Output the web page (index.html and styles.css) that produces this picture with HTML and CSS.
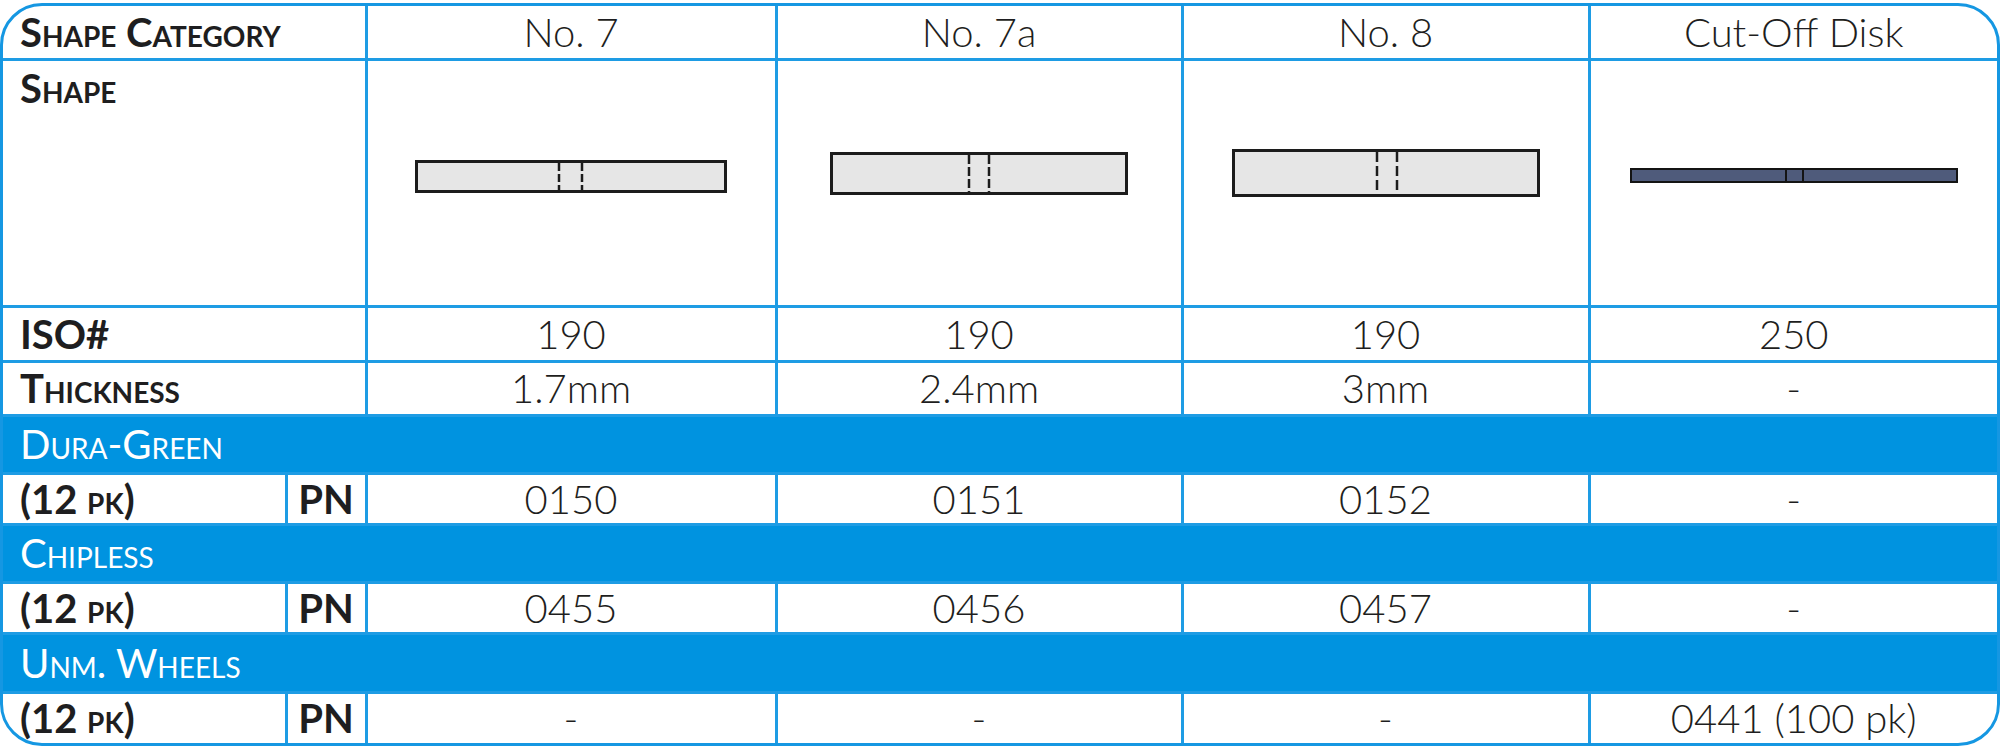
FILE: index.html
```html
<!DOCTYPE html>
<html>
<head>
<meta charset="utf-8">
<link rel="stylesheet" href="styles.css">
</head>
<body>
  <div class="chart">
    <table>
      <colgroup>
        <col class="col-label">
        <col class="col-pn">
        <col class="col-a">
        <col class="col-b">
        <col class="col-c">
        <col class="col-d">
      </colgroup>

      <!-- header -->
      <tr class="row-head">
        <th colspan="2" class="label">Shape Category</th>
        <th>No. 7</th>
        <th>No. 7a</th>
        <th>No. 8</th>
        <th>Cut-Off Disk</th>
      </tr>

      <!-- shape drawings -->
      <tr class="row-shape">
        <td colspan="2" class="label label-top">Shape</td>
        <td class="shape">
          <svg width="312" height="60" viewBox="0 0 312 60">
            <rect x="1.5" y="15.5" width="309" height="30" fill="#e6e6e6" stroke="#1c1c1c" stroke-width="3"/>
            <line x1="144" y1="17" x2="144" y2="44" stroke="#1c1c1c" stroke-width="2.5" stroke-dasharray="8 3"/>
            <line x1="167" y1="17" x2="167" y2="44" stroke="#1c1c1c" stroke-width="2.5" stroke-dasharray="8 3"/>
          </svg>
        </td>
        <td class="shape">
          <svg width="298" height="60" viewBox="0 0 298 60">
            <rect x="1.5" y="7.5" width="295" height="40" fill="#e6e6e6" stroke="#1c1c1c" stroke-width="3"/>
            <line x1="139" y1="9" x2="139" y2="46" stroke="#1c1c1c" stroke-width="2.5" stroke-dasharray="9 3"/>
            <line x1="159" y1="9" x2="159" y2="46" stroke="#1c1c1c" stroke-width="2.5" stroke-dasharray="9 3"/>
          </svg>
        </td>
        <td class="shape">
          <svg width="308" height="60" viewBox="0 0 308 60">
            <rect x="1.5" y="4.5" width="305" height="45" fill="#e6e6e6" stroke="#1c1c1c" stroke-width="3"/>
            <line x1="145" y1="6" x2="145" y2="48" stroke="#1c1c1c" stroke-width="2.5" stroke-dasharray="10 4"/>
            <line x1="165" y1="6" x2="165" y2="48" stroke="#1c1c1c" stroke-width="2.5" stroke-dasharray="10 4"/>
          </svg>
        </td>
        <td class="shape">
          <svg width="328" height="60" viewBox="0 0 328 60">
            <rect x="1" y="23" width="326" height="13" fill="#4f5b7b" stroke="#141414" stroke-width="2"/>
            <line x1="156" y1="23" x2="156" y2="36" stroke="#141414" stroke-width="2"/>
            <line x1="173" y1="23" x2="173" y2="36" stroke="#141414" stroke-width="2"/>
          </svg>
        </td>
      </tr>

      <tr class="row-iso">
        <td colspan="2" class="label">ISO#</td>
        <td>190</td>
        <td>190</td>
        <td>190</td>
        <td>250</td>
      </tr>

      <tr class="row-thick">
        <td colspan="2" class="label">Thickness</td>
        <td>1.7mm</td>
        <td>2.4mm</td>
        <td>3mm</td>
        <td>-</td>
      </tr>

      <!-- Dura-Green -->
      <tr class="band">
        <td colspan="6">Dura-Green</td>
      </tr>
      <tr class="row-pn">
        <td class="label">(12 pk)</td>
        <td class="pn">PN</td>
        <td>0150</td>
        <td>0151</td>
        <td>0152</td>
        <td>-</td>
      </tr>

      <!-- Chipless -->
      <tr class="band">
        <td colspan="6">Chipless</td>
      </tr>
      <tr class="row-pn">
        <td class="label">(12 pk)</td>
        <td class="pn">PN</td>
        <td>0455</td>
        <td>0456</td>
        <td>0457</td>
        <td>-</td>
      </tr>

      <!-- Unmounted wheels -->
      <tr class="band band-last">
        <td colspan="6">Unm. Wheels</td>
      </tr>
      <tr class="row-pn">
        <td class="label">(12 pk)</td>
        <td class="pn">PN</td>
        <td>-</td>
        <td>-</td>
        <td>-</td>
        <td>0441 (100 pk)</td>
      </tr>
    </table>
  </div>
</body>
</html>
```

FILE: styles.css
```css
body {
  margin: 0;
  padding-top: 3px;
  background-color: #ffffff;
  font-family: Lato, "Open Sans", sans-serif;
  color: #1e1e20;
}

.chart {
  height: 737px;
  border: 3px solid #1597e2;
  border-radius: 42px;
  overflow: hidden;
}

table {
  width: 100%;
  border-collapse: collapse;
  border-style: hidden;
  table-layout: fixed;
  font-size: 40px;
}

th,
td {
  border: 3px solid #1e9ce4;
  padding: 0;
  text-align: center;
  font-weight: 300;
  white-space: nowrap;
}

.col-label { width: 283px; }
.col-pn { width: 80px; }
.col-a { width: 410px; }
.col-b { width: 406px; }
.col-c { width: 407px; }
.col-d { width: 408px; }

.row-head { height: 53px; }
.row-shape { height: 247px; }
.row-iso { height: 55px; }
.row-thick { height: 54px; }
.row-pn { height: 51px; }
.band { height: 58px; }
.band-last { height: 59px; }

.label {
  text-align: left;
  padding-left: 17px;
  font-weight: bold;
  font-variant: small-caps;
}

.label-top {
  vertical-align: top;
  padding-top: 3px;
}

.pn {
  font-weight: bold;
}

.shape svg {
  display: block;
  margin: 0 auto 13px;
}

.band td {
  background-color: #0093e0;
  color: #ffffff;
  text-align: left;
  padding-left: 17px;
  font-variant: small-caps;
  font-weight: normal;
}
```
